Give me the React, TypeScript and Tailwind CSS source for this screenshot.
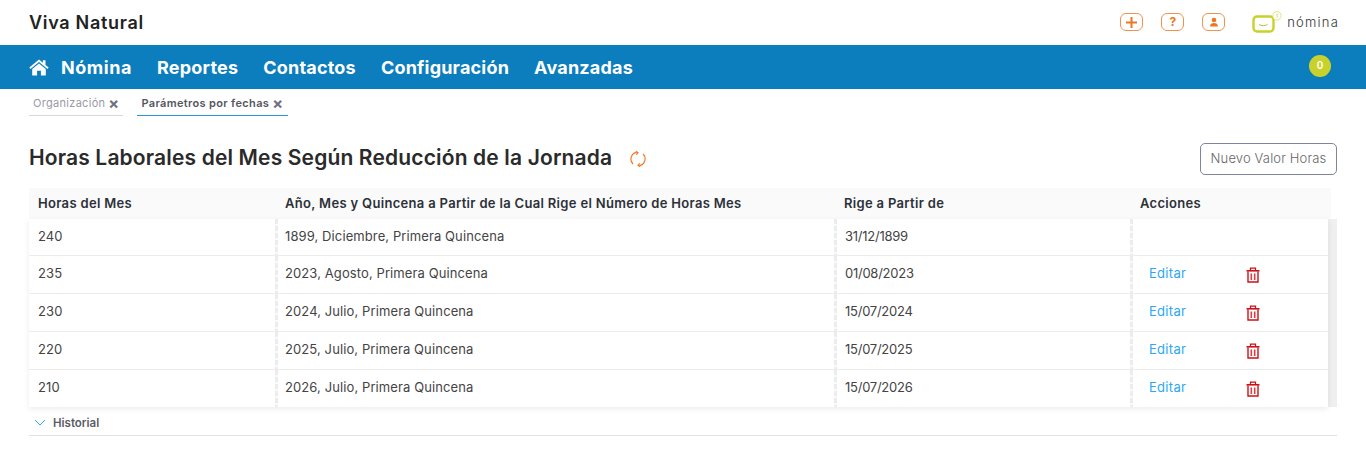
import React from 'react';

const rows = [
  { horas: '240', periodo: '1899, Diciembre, Primera Quincena', fecha: '31/12/1899', acciones: false },
  { horas: '235', periodo: '2023, Agosto, Primera Quincena', fecha: '01/08/2023', acciones: true },
  { horas: '230', periodo: '2024, Julio, Primera Quincena', fecha: '15/07/2024', acciones: true },
  { horas: '220', periodo: '2025, Julio, Primera Quincena', fecha: '15/07/2025', acciones: true },
  { horas: '210', periodo: '2026, Julio, Primera Quincena', fecha: '15/07/2026', acciones: true },
];

const menu = ['Reportes', 'Contactos', 'Configuración', 'Avanzadas'];

const Trash = () => (
  <svg width="14" height="16" viewBox="0 0 14 16" className="text-[#cc1219]">
    <path d="M0.5 3h13v1.6h-13z" fill="currentColor" />
    <path d="M4.5 3V1.2h5V3" fill="none" stroke="currentColor" strokeWidth="1.3" />
    <path d="M2 4.5V15h10V4.5" fill="none" stroke="currentColor" strokeWidth="1.4" />
    <path d="M5.3 6.5v6.5M8.7 6.5v6.5" stroke="currentColor" strokeWidth="1.6" opacity="0.8" />
  </svg>
);

const Divider = () => (
  <div className="w-[3px] self-stretch bg-[repeating-linear-gradient(to_bottom,#ececee_0,#ececee_5px,#fafafa_5px,#fafafa_7px)]" />
);

const HeaderIcon = ({ children }: { children: React.ReactNode }) => (
  <div className="w-[23px] h-[18px] border border-[#f0934f] rounded-[6px] flex items-center justify-center text-[#ee7623]">
    {children}
  </div>
);

export default function App() {
  return (
    <div className="w-[1366px] h-[467px] overflow-hidden bg-white text-[#333] font-['Inter','Open_Sans',sans-serif]">
      <header className="h-[45px] flex items-center justify-between pl-[29px] pr-[27px]">
        <h1 className="text-[18px] font-semibold text-[#222] tracking-[0.7px]">Viva Natural</h1>
        <div className="flex items-center">
          <div className="flex items-center gap-[18px] mb-[1px]">
            <HeaderIcon>
              <svg width="13" height="13" viewBox="0 0 13 13">
                <path d="M6.5 1v11M1 6.5h11" stroke="currentColor" strokeWidth="2" />
              </svg>
            </HeaderIcon>
            <HeaderIcon>
              <span className="text-[12px] font-bold leading-none">?</span>
            </HeaderIcon>
            <HeaderIcon>
              <svg width="10" height="10" viewBox="0 0 10 10" fill="currentColor">
                <circle cx="5" cy="3" r="2.3" />
                <path d="M1 9.5c0-2.4 1.8-3.5 4-3.5s4 1.100 4 3.500z" />
              </svg>
            </HeaderIcon>
          </div>
          <svg width="30" height="24" viewBox="0 0 30 24" className="ml-[27px] mt-[1px]">
            <rect x="1.500" y="5.500" width="20" height="15" rx="3.500" fill="none" stroke="#c9d22a" strokeWidth="2.400" />
            <path d="M7 13.500c2.500 1.600 6 1.600 8.500 0" fill="none" stroke="#b9c22a" strokeWidth="1" />
            <circle cx="25" cy="4.800" r="4.200" fill="#fff" stroke="#dbe27a" strokeWidth="0.900" />
            <path d="M24 3.300h2l-1.200 1.400c1 0 1.200 1.800-.8 1.600" fill="none" stroke="#c9d22a" strokeWidth="0.600" />
          </svg>
          <span className="ml-[5px] text-[13px] font-light text-[#333] tracking-[1.2px]">nómina</span>
        </div>
      </header>

      <nav className="h-[44px] bg-[#0c7dbd] flex items-center pl-[29px] pr-[35px] text-white">
        <svg width="20" height="17" viewBox="0 0 20 17" fill="currentColor" className="mr-[12px]">
          <path d="M10 0.500 0.300 8.500l1.200 1.400L10 3l8.500 6.900 1.200-1.400-3.200-2.600V1.200h-2.600v2.600z" />
          <path d="M10 4.500 3.200 10v6.500h4.900v-4.700h3.800v4.700h4.900V10z" />
        </svg>
        <div className="flex items-center gap-[25px] text-[18px] font-bold tracking-[0.2px]">
          <span className="tracking-[0.55px]">Nómina</span>
          {menu.map((item) => (
            <span key={item}>{item}</span>
          ))}
        </div>
        <div className="ml-auto w-[22px] h-[22px] rounded-full bg-[#c9d22a] flex items-center justify-center text-[10px] font-semibold mb-[3px]">
          0
        </div>
      </nav>

      <div className="h-[27px] flex items-end pl-[29px] gap-[14px] text-[11px]">
        <div className="w-[94px] h-[27px] border-b border-[#d8d8dc] pl-[4px] pt-[2px] flex items-center gap-[3px] text-[#9a9aa6]">
          <span className="tracking-[0.3px]">Organización</span>
          <span className="text-[#6f7080] font-bold text-[16px] leading-none">×</span>
        </div>
        <div className="w-[151px] h-[27px] border-b border-[#2a92d6] pl-[4.500px] pt-[2px] flex items-center gap-[3px] text-[#55565f] font-semibold">
          <span className="tracking-[0.34px]">Parámetros por fechas</span>
          <span className="text-[#6f7080] font-bold text-[16px] leading-none">×</span>
        </div>
      </div>

      <section className="pl-[29px] pr-[29px]">
        <div className="h-[72px] flex items-center justify-between pt-[14px]">
          <div className="flex items-center pb-[2px]">
            <h2 className="text-[21px] font-semibold text-[#2a2a2a] tracking-[0.15px]">
              Horas Laborales del Mes Según Reducción de la Jornada
            </h2>
            <svg width="16" height="16" viewBox="0 0 16 16" fill="none" stroke="#f07a2a" strokeWidth="1.200" className="ml-[18px] mt-[2px]">
              <path d="M3 13A6.800 6.800 0 0 1 6.800 1.400" />
              <path d="M5.800 0.300 8 1.600 6.300 3.700" />
              <path d="M13 3A6.800 6.800 0 0 1 9.200 14.600" />
              <path d="M10.200 15.700 8 14.400 9.700 12.300" />
            </svg>
          </div>
          <button className="w-[137px] h-[32px] border border-[#80849a] rounded-[5px] text-[13px] font-light text-[#666] tracking-[0.15px]">
            Nuevo Valor Horas
          </button>
        </div>

        <div className="w-[1302px] h-[31px] bg-[#fafafa] grid grid-cols-[246px_3px_556px_3px_293px_3px_198px] items-center text-[13px] font-semibold text-[#2c3038] tracking-[0.32px]">
          <div className="pl-[9px]">Horas del Mes</div>
          <div />
          <div className="pl-[7px]">Año, Mes y Quincena a Partir de la Cual Rige el Número de Horas Mes</div>
          <div />
          <div className="pl-[7px]">Rige a Partir de</div>
          <div />
          <div className="pl-[7px]">Acciones</div>
        </div>

        <div className="flex w-[1308px] bg-[#efefef]">
          <div className="w-[1299px] bg-white shadow-[0_2px_6px_rgba(0,0,0,0.08)]">
            {rows.map((row, i) => {
              const cell = i === 0 ? '' : 'pb-[2px]';
              return (
                <div
                  key={row.horas}
                  className={`grid grid-cols-[246px_3px_556px_3px_293px_3px_195px] items-center text-[13px] tracking-[0.1px] text-[#444] ${
                    i === 0 ? 'h-[37px]' : i === rows.length - 1 ? 'h-[37px]' : 'h-[38px]'
                  } ${i < rows.length - 1 ? 'border-b border-[#ececec]' : ''}`}
                >
                  <div className={`pl-[9px] ${cell}`}>{row.horas}</div>
                  <Divider />
                  <div className={`pl-[7px] ${cell}`}>{row.periodo}</div>
                  <Divider />
                  <div className={`pl-[8px] tracking-[-0.25px] ${cell}`}>{row.fecha}</div>
                  <Divider />
                  <div className="pl-[16px] flex items-center">
                    {row.acciones && (
                      <>
                        <span className="w-[97px] pb-[2px] text-[#2aa8f5] text-[13px] tracking-[0.3px]">Editar</span>
                        <Trash />
                      </>
                    )}
                  </div>
                </div>
              );
            })}
          </div>
        </div>

        <div className="h-[29px] border-b border-[#e2e2e2] flex items-center pl-[5px] pt-[5px] text-[11.500px] font-semibold text-[#5b5c66]">
          <svg width="12" height="7" viewBox="0 0 12 7" fill="none" stroke="#2aa8f5" strokeWidth="1" className="mr-[7px] mb-[2px]">
            <path d="M1 1l5 5 5-5" />
          </svg>
          Historial
        </div>
      </section>
    </div>
  );
}
